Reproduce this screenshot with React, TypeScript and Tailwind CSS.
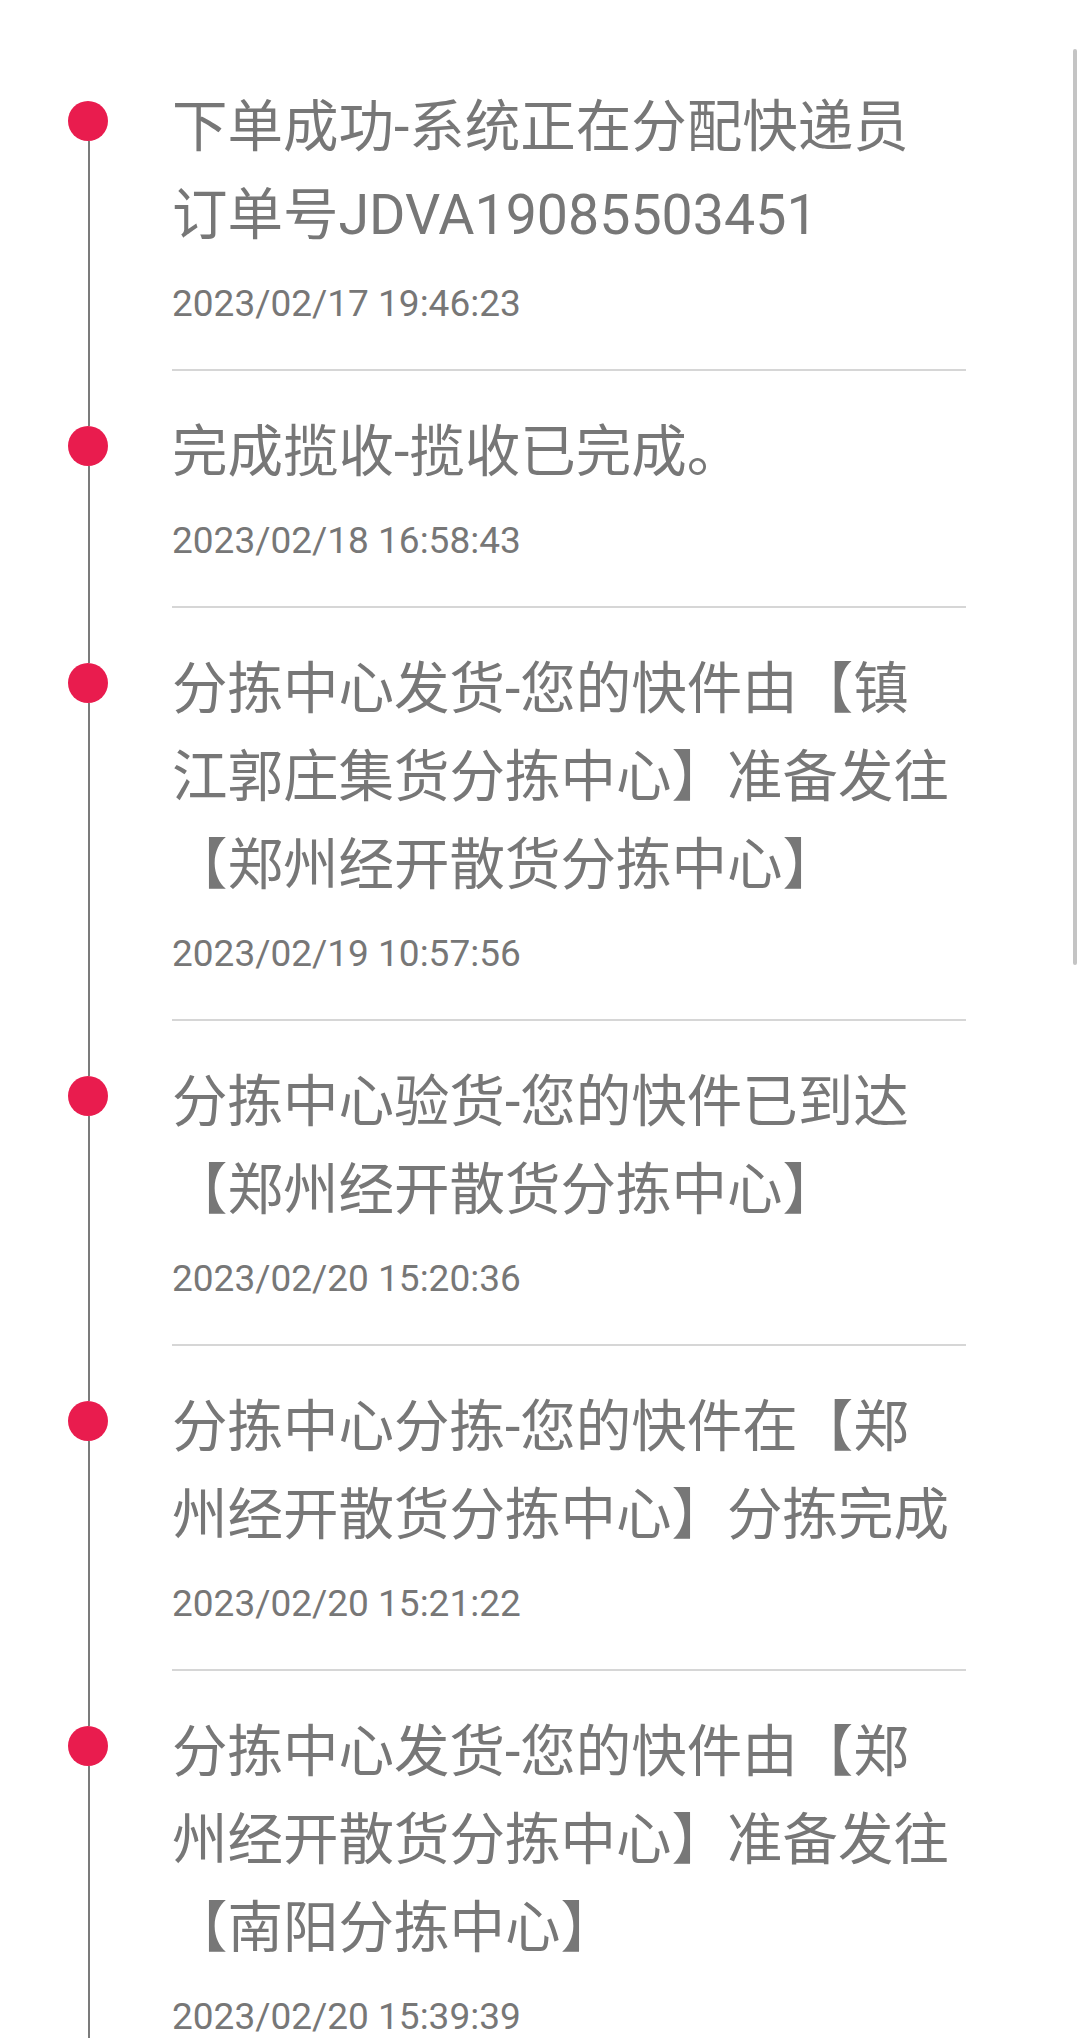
import React from "react";

type TrackNode = {
  desc: string;
  time: string;
};

const nodes: TrackNode[] = [
  { desc: "下单成功-系统正在分配快递员\n订单号JDVA19085503451", time: "2023/02/17 19:46:23" },
  { desc: "完成揽收-揽收已完成。", time: "2023/02/18 16:58:43" },
  { desc: "分拣中心发货-您的快件由【镇江郭庄集货分拣中心】准备发往【郑州经开散货分拣中心】", time: "2023/02/19 10:57:56" },
  { desc: "分拣中心验货-您的快件已到达【郑州经开散货分拣中心】", time: "2023/02/20 15:20:36" },
  { desc: "分拣中心分拣-您的快件在【郑州经开散货分拣中心】分拣完成", time: "2023/02/20 15:21:22" },
  { desc: "分拣中心发货-您的快件由【郑州经开散货分拣中心】准备发往【南阳分拣中心】", time: "2023/02/20 15:39:39" },
];

const TrackItem: React.FC<{ node: TrackNode; first: boolean }> = ({ node, first }) => {
  return (
    <div className="flex">
      {/* timeline rail */}
      <div className="flex w-[172px] shrink-0 flex-col pl-[68px]">
        <div className={`ml-[20px] h-[55px] w-[2px] ${first ? "bg-transparent" : "bg-[#7b7b7b]"}`} />
        <div className="h-[40px] w-[40px] rounded-full bg-[#e91c4e]" />
        <div className="ml-[20px] w-[2px] flex-1 bg-[#7b7b7b]" />
      </div>

      <div className="w-[794px] pt-[38px]">
        <p className="w-[785px] whitespace-pre-line text-[55.5px] leading-[88px] text-[#777777]">
          {node.desc}
        </p>
        <p className="mt-[22px] mb-[43px] text-[37px] leading-[44px] text-[#777777]">{node.time}</p>
        <div className="h-[2px] bg-[#d6d6d6]" />
      </div>
    </div>
  );
};

export default function App() {
  return (
    <div className="relative h-[2038px] w-[1080px] overflow-hidden bg-white font-[Roboto,'Noto_Sans_CJK_SC',sans-serif]">
      <div className="pt-[46px]">
        {nodes.map((node, i) => (
          <TrackItem key={i} node={node} first={i === 0} />
        ))}
      </div>

      {/* scroll indicator */}
      <div className="absolute right-[3px] top-[49px] h-[916px] w-[4px] rounded-full bg-[#c4c4c4]" />
    </div>
  );
}
